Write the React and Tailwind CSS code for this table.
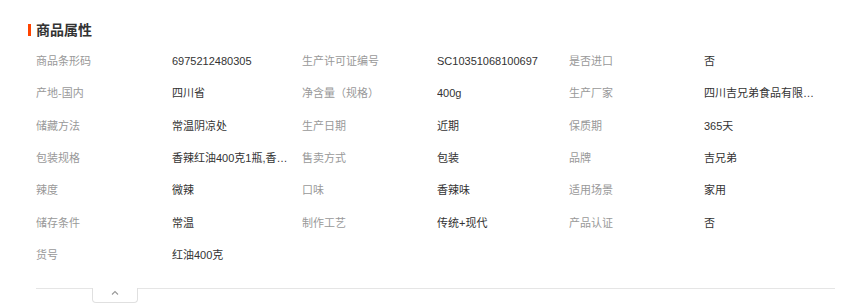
import React from "react";

const rows = [
  ["商品条形码", "6975212480305", "生产许可证编号", "SC10351068100697", "是否进口", "否"],
  ["产地-国内", "四川省", "净含量（规格）", "400g", "生产厂家", "四川吉兄弟食品有限公司"],
  ["储藏方法", "常温阴凉处", "生产日期", "近期", "保质期", "365天"],
  ["包装规格", "香辣红油400克1瓶,香辣红油", "售卖方式", "包装", "品牌", "吉兄弟"],
  ["辣度", "微辣", "口味", "香辣味", "适用场景", "家用"],
  ["储存条件", "常温", "制作工艺", "传统+现代", "产品认证", "否"],
  ["货号", "红油400克"],
];

export default function App() {
  return (
    <div
      className="w-[845px] h-[305px] bg-white overflow-hidden"
      style={{ fontFamily: '"Liberation Sans", "Noto Sans CJK SC", sans-serif' }}
    >
      <div className="flex items-center pl-[28px] pt-[21px] h-[45px] items-start">
        <div className="w-[3px] h-[12px] bg-[#ff4400] mt-[3px]" />
        <div className="ml-[5px] text-[14px] leading-[18px] font-bold text-[#333]">商品属性</div>
      </div>
      <div className="pl-[36px]">
        <div className="grid grid-cols-[136px_130px_135px_132px_135px_131px] text-[11px]">
          {rows.map((r, i) =>
            r.map((c, j) => (
              <div
                key={i + "-" + j}
                className={
                  "h-[32.33px] leading-[32px] truncate pr-[14px] " +
                  (j % 2 === 0 ? "text-[#999]" : "text-[#333]")
                }
              >
                {c}
              </div>
            ))
          )}
        </div>
        <div className="mt-[17px] w-[799px] border-t border-[#e5e5e5] relative">
          <div className="absolute left-[56px] top-[-1px] w-[46px] h-[15px] border border-t-0 border-[#e0e0e0] rounded-b-[4px] bg-white flex items-center justify-center">
            <svg width="8" height="5" viewBox="0 0 8 5" className="mt-[-6px]">
              <path d="M1 4.5 L4 1.5 L7 4.5" fill="none" stroke="#999" strokeWidth="1.1" />
            </svg>
          </div>
        </div>
      </div>
    </div>
  );
}
